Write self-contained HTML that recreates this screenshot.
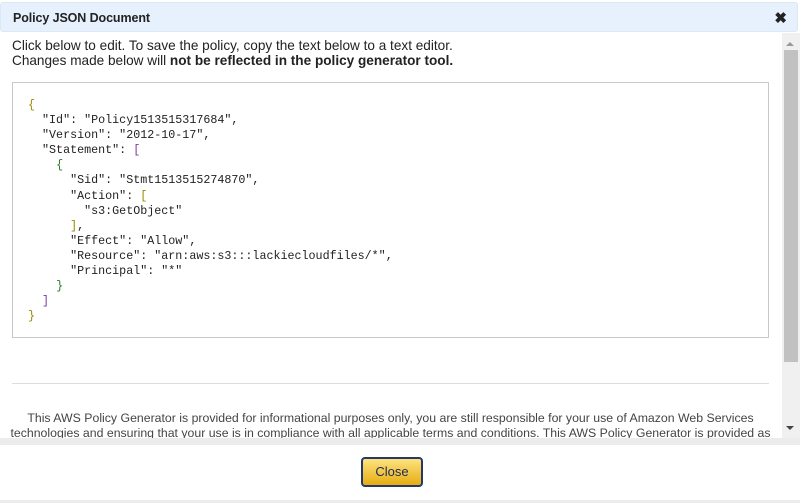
<!DOCTYPE html>
<html><head><style>
body{margin:0;width:800px;height:503px;overflow:hidden;background:#fff;font-family:"Liberation Sans",sans-serif;position:relative}
.hdr{position:absolute;left:0;top:2px;width:798px;height:30px;background:#e6f1fd;border:1px solid #dde8f5;border-radius:3px;box-sizing:border-box}
.hdr span{position:absolute;left:12px;top:8px;font-size:12.5px;color:#222;font-weight:bold;letter-spacing:-0.1px}
.x{position:absolute;right:10px;top:6px;font-size:15px;font-weight:bold;color:#222}
.intro{position:absolute;left:12px;top:38px;font-size:13.6px;line-height:15px;color:#222;white-space:nowrap}
.code{position:absolute;left:12px;top:82px;width:757px;height:256px;border:1px solid #c8c8c8;box-sizing:border-box}
pre{margin:0;position:absolute;left:15px;top:15px;font-family:"Liberation Mono",monospace;font-size:11.7px;line-height:15.1px;color:#222}
.y{color:#9a8a00}.p{color:#7a3aa0}.g{color:#2a7a2a}
.hr{position:absolute;left:12px;top:383px;width:757px;height:1px;background:#ddd}
.disc{position:absolute;left:0;top:411px;width:781px;height:27px;overflow:hidden;text-align:center;font-size:12.3px;line-height:15px;color:#444;white-space:nowrap}
.sb{position:absolute;left:782px;top:33px;width:18px;height:405px;background:#f0f0f0}
.th{position:absolute;left:784px;top:50px;width:14px;height:312px;background:#c1c1c1}
.gap{position:absolute;left:0;top:438px;width:800px;height:7px;background:#ececec}
.foot{position:absolute;left:0;top:500px;width:800px;height:3px;background:#ececec}
.btn{position:absolute;left:361px;top:457px;width:62px;height:30px;box-sizing:border-box;border:2px solid #23396e;border-radius:4px;background:linear-gradient(#fde37f,#e6ac12);font-size:13px;color:#1a2a5a;text-align:center;line-height:26px}
</style></head><body>
<div class="hdr"><span>Policy JSON Document</span><div class="x">✖</div></div>
<div class="intro">Click below to edit. To save the policy, copy the text below to a text editor.<br>Changes made below will <b>not be reflected in the policy generator tool.</b></div>
<div class="code"><pre><span class="y">{</span>
  "Id": "Policy1513515317684",
  "Version": "2012-10-17",
  "Statement": <span class="p">[</span>
    <span class="g">{</span>
      "Sid": "Stmt1513515274870",
      "Action": <span class="y">[</span>
        "s3:GetObject"
      <span class="y">]</span>,
      "Effect": "Allow",
      "Resource": "arn:aws:s3:::lackiecloudfiles/*",
      "Principal": "*"
    <span class="g">}</span>
  <span class="p">]</span>
<span class="y">}</span></pre></div>
<div class="hr"></div>
<div class="disc">This AWS Policy Generator is provided for informational purposes only, you are still responsible for your use of Amazon Web Services<br>technologies and ensuring that your use is in compliance with all applicable terms and conditions. This AWS Policy Generator is provided as</div>
<div class="sb"></div><div class="th"></div>
<div style="position:absolute;left:786px;top:42px;width:0;height:0;border-left:4px solid transparent;border-right:4px solid transparent;border-bottom:4px solid #999"></div>
<div style="position:absolute;left:786px;top:426px;width:0;height:0;border-left:4px solid transparent;border-right:4px solid transparent;border-top:4px solid #444"></div>
<div class="gap"></div>
<div class="btn">Close</div>
<div class="foot"></div>
</body></html>
